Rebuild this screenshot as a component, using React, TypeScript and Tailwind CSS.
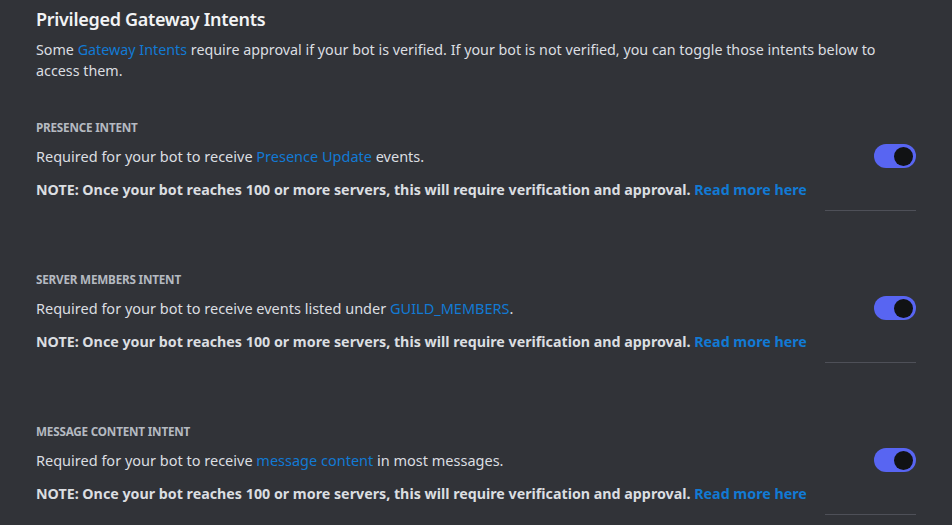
import React from "react";

const LINK = "text-[#127ad4]";

function Toggle() {
  return (
    <div className="w-[42px] h-[24px] rounded-full bg-[#5865f2] flex items-center justify-end px-[3px] shrink-0">
      <div className="w-[19px] h-[19px] rounded-full bg-[#111214]" />
    </div>
  );
}

function Section({ label, desc }: { label: string; desc: React.ReactNode }) {
  return (
    <div className="flex flex-col h-[92px]">
      <div className="text-[11.7px] h-[16px] leading-[16px] font-bold text-[#b5bac1] tracking-[-0.2px] uppercase">{label}</div>
      <div className="flex items-center justify-between mt-[9px] h-[24px]">
        <div className="text-[14.5px] leading-[20px] h-[20px] text-[#dbdee1] whitespace-nowrap">{desc}</div>
        <Toggle />
      </div>
      <div className="text-[14.25px] leading-[20px] h-[20px] font-bold text-[#dbdee1] mt-[12px] whitespace-nowrap">
        NOTE: Once your bot reaches 100 or more servers, this will require verification and approval.{" "}
        <span className={LINK}>Read more here</span>
      </div>
      <div className="flex justify-end mt-[10px]">
        <div className="w-[91px] h-px bg-[#4e5058]" />
      </div>
    </div>
  );
}

export default function App() {
  return (
    <div
      className="w-[952px] h-[525px] bg-[#313338] overflow-hidden px-[36px] pt-[6px]"
      style={{ fontFamily: '"Noto Sans", "Open Sans", sans-serif' }}
    >
      <h1 className="text-[18px] leading-[26px] font-semibold text-[#f2f3f5] tracking-[-0.3px]">Privileged Gateway Intents</h1>
      <p className="text-[14.3px] leading-[21px] text-[#dbdee1] mt-[7px]">
        Some <span className={LINK}>Gateway Intents</span> require approval if your bot is verified. If your bot is not
        verified, you can toggle those intents below to access them.
      </p>
      <div className="flex flex-col gap-[60px] mt-[38px]">
        <Section
          label="Presence Intent"
          desc={
            <>
              Required for your bot to receive <span className={LINK}>Presence Update</span> events.
            </>
          }
        />
        <Section
          label="Server Members Intent"
          desc={
            <>
              Required for your bot to receive events listed under <span className={LINK}>GUILD_MEMBERS</span>.
            </>
          }
        />
        <Section
          label="Message Content Intent"
          desc={
            <>
              Required for your bot to receive <span className={LINK}>message content</span> in most messages.
            </>
          }
        />
      </div>
    </div>
  );
}
